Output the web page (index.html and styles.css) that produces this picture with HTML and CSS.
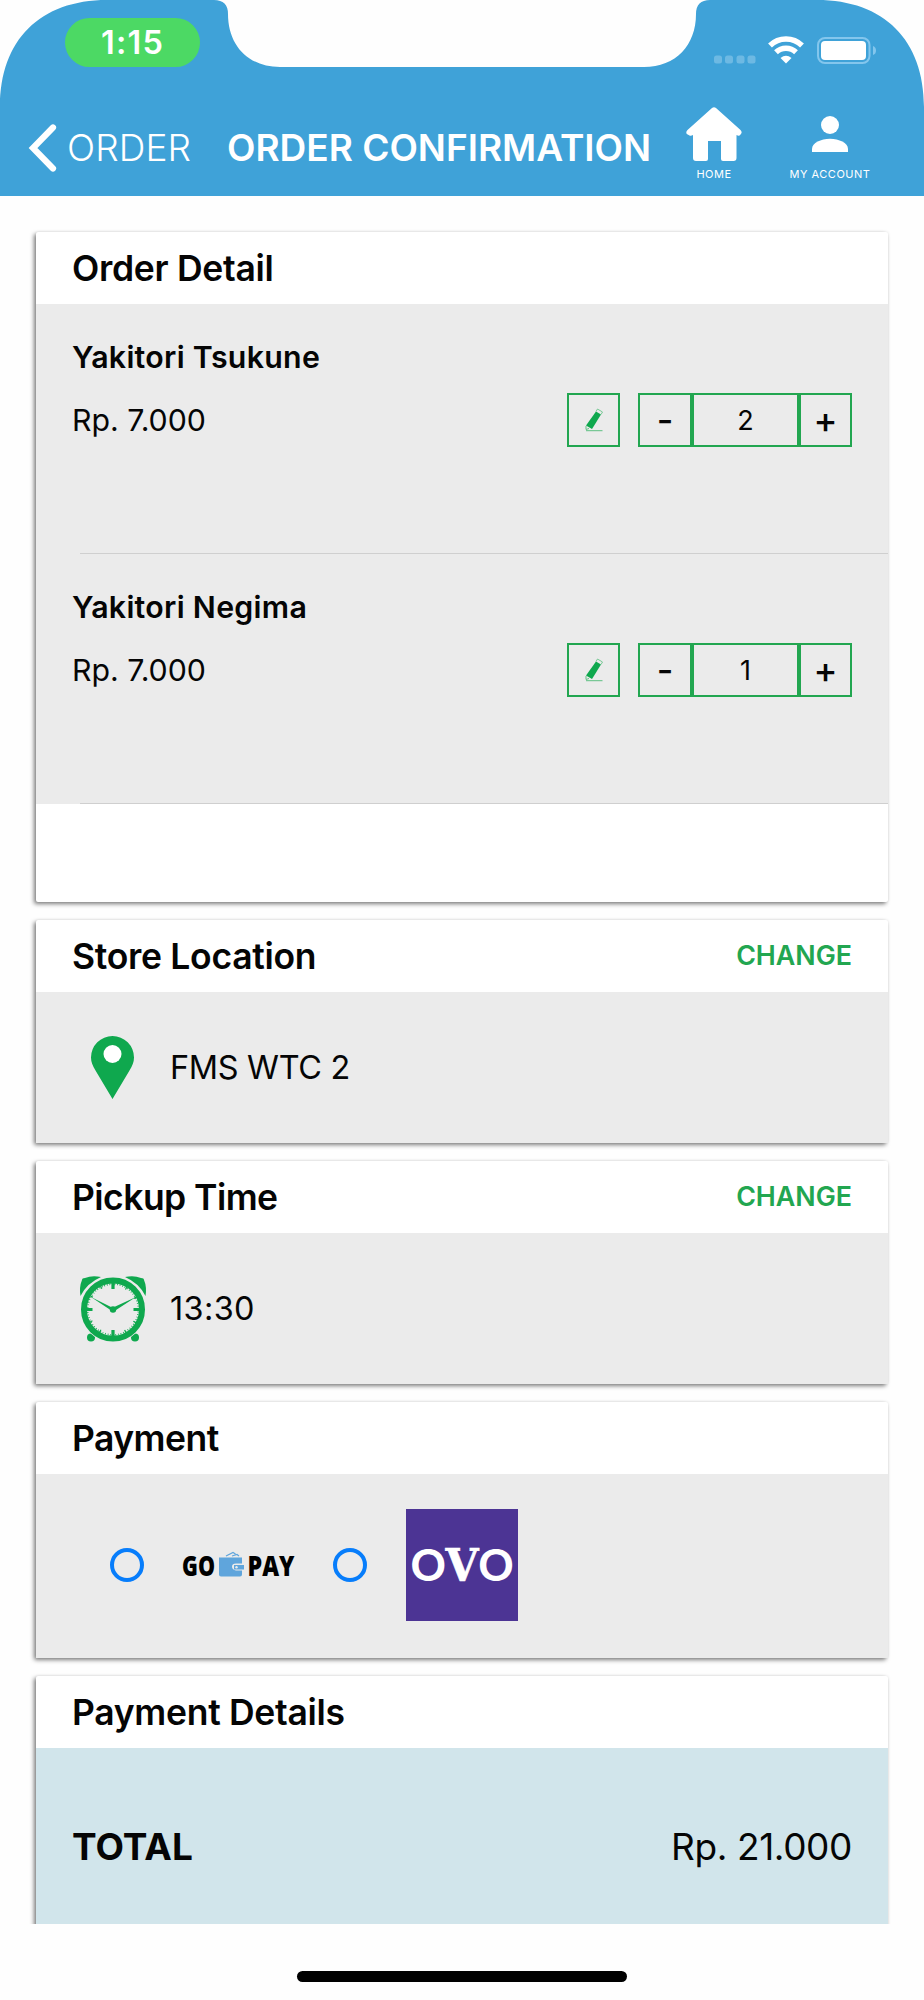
FILE: index.html
```html
<!DOCTYPE html>
<html lang="en">
<head>
<meta charset="utf-8">
<title>Order Confirmation</title>
<link rel="stylesheet" href="styles.css">
</head>
<body>
<div class="screen">
  <header class="header">
    <svg class="header-shape" width="924" height="196" viewBox="0 0 924 196"><path d="M0 196V107C0 40 40 0 107 0H214Q228 0 228 14C228 45 248 67 280 67H644C676 67 696 45 696 14Q696 0 710 0H817C884 0 924 40 924 107V196Z" fill="#3fa2d8"/></svg>
    <div class="status-bar">
      <span class="clock-pill">1:15</span>
      <svg class="status-icons" width="164" height="30" viewBox="0 0 164 30">
        <g fill="#6db9e3"><rect x="1" y="20.500" width="8" height="8" rx="2.500"/><rect x="12" y="20.500" width="8" height="8" rx="2.500"/><rect x="23.500" y="20.500" width="8" height="8" rx="2.500"/><rect x="34.500" y="20.500" width="8" height="8" rx="2.500"/></g>
        <g fill="none" stroke="#fff" stroke-width="5.500">
          <path d="M57 10.500A23 23 0 0 1 89 10.500"/>
          <path d="M63 17.300A14.500 14.500 0 0 1 83 17.300"/>
        </g>
        <path d="M67.500 23Q73 18.500 78.500 23L73 28.500Z" fill="#fff"/>
        <rect x="105" y="3" width="51.500" height="25" rx="7" fill="none" stroke="#83c6ed" stroke-width="2"/>
        <rect x="108" y="6" width="45" height="19" rx="4" fill="#fff"/>
        <path d="M160 11Q163 12 163 15.500T160 20Z" fill="#83c6ed"/>
      </svg>
    </div>
    <nav class="nav">
      <a class="back">
        <svg width="30" height="50" viewBox="0 0 30 50"><path d="M25 4.500L5 25L25 45.500" fill="none" stroke="#fff" stroke-width="6.200" stroke-linecap="round" stroke-linejoin="miter"/></svg>
        <span>ORDER</span>
      </a>
      <h1 class="title">ORDER CONFIRMATION</h1>
      <a class="nav-item home">
        <svg width="56" height="54" viewBox="0 0 56 54"><path d="M26 1Q28 -.7 30 1L54.500 23Q56.500 25 55 27L53.500 28.500Q52.500 29.300 50.500 28V51Q50.500 54 47.500 54H37Q35 54 35 52V34H22V52Q22 54 20 54H10Q7 54 7 51V28Q5 29.300 3.500 28.500L.800 27Q-.5 25 1.500 23Z" fill="#fff"/></svg>
        <span>HOME</span>
      </a>
      <a class="nav-item account">
        <svg width="36" height="36" viewBox="0 0 36 36"><circle cx="18" cy="9" r="9" fill="#fff"/><path d="M0 36V33C0 27 9 22.800 18 22.800S36 27 36 33V36Z" fill="#fff"/></svg>
        <span>MY ACCOUNT</span>
      </a>
    </nav>
  </header>

  <main class="content">
    <section class="card order-card">
      <div class="card-head"><h2>Order Detail</h2></div>
      <div class="item">
        <h3>Yakitori Tsukune</h3>
        <div class="item-row">
          <span class="price">Rp. 7.000</span>
          <button class="box edit"><svg width="18" height="24" viewBox="0 0 18 24"><path d="M11 3.500L16 6.500L7 21L1 17.500Z" fill="#0fa84e"/><path d="M11 3.500L12.500 1L17.500 4L16 6.500" fill="none" stroke="#5fc083" stroke-width=".8"/><path d="M1 18V21.500L4 20.500M1 22.700H17.500" fill="none" stroke="#5fc083" stroke-width="1"/></svg></button>
          <button class="box sign minus">-</button><span class="box qty">2</span><button class="box sign">+</button>
        </div>
      </div>
      <div class="item">
        <h3>Yakitori Negima</h3>
        <div class="item-row">
          <span class="price">Rp. 7.000</span>
          <button class="box edit"><svg width="18" height="24" viewBox="0 0 18 24"><path d="M11 3.500L16 6.500L7 21L1 17.500Z" fill="#0fa84e"/><path d="M11 3.500L12.500 1L17.500 4L16 6.500" fill="none" stroke="#5fc083" stroke-width=".8"/><path d="M1 18V21.500L4 20.500M1 22.700H17.500" fill="none" stroke="#5fc083" stroke-width="1"/></svg></button>
          <button class="box sign minus">-</button><span class="box qty">1</span><button class="box sign">+</button>
        </div>
      </div>
    </section>

    <section class="card info-card">
      <div class="card-head"><h2>Store Location</h2><a class="change">CHANGE</a></div>
      <div class="card-body info">
        <svg class="info-icon" width="68" height="68" viewBox="0 0 68 68"><path d="M33.500 65L16.500 36.500C13.500 31.500 12 28 12 23.500A21.500 21.500 0 0 1 55 23.500C55 28 53.500 31.500 50.500 36.500Z" fill="#0fa84e"/><circle cx="33.500" cy="20" r="9" fill="#fff"/></svg>
        <span class="store">FMS WTC 2</span>
      </div>
    </section>

    <section class="card info-card">
      <div class="card-head"><h2 class="tight">Pickup Time</h2><a class="change">CHANGE</a></div>
      <div class="card-body info">
        <svg class="info-icon" width="68" height="68" viewBox="0 0 68 68">
          <g fill="#0fa84e"><path d="M1.500 21Q0 12 3 5Q3 3 6 3Q13 0 22 2Q8 8 1.500 21Z"/><path d="M66.500 21Q68 12 65 5Q65 3 62 3Q55 0 46 2Q60 8 66.500 21Z"/><circle cx="12" cy="62.500" r="4"/><circle cx="56" cy="62.500" r="4"/></g>
          <circle cx="34" cy="34.500" r="32.800" fill="#ebebeb"/>
          <circle cx="34" cy="34.500" r="29" fill="none" stroke="#0fa84e" stroke-width="6"/>
          <circle cx="34" cy="34.500" r="25" fill="none" stroke="#0fa84e" stroke-width="3" stroke-dasharray="1.200 11.890" stroke-dashoffset=".6"/>
          <circle cx="34" cy="34.500" r="25.300" fill="none" stroke="#0fa84e" stroke-width="1.400" stroke-dasharray=".8 1.818" stroke-dashoffset=".4"/>
          <path d="M34 8V14M34 55V61M7.500 34.500H13.500M54.500 34.500H60.500" stroke="#0fa84e" stroke-width="3.200"/>
          <path d="M12 22L35 33.500L33 36ZM57 22L33 33L35.500 36Z" fill="#0fa84e"/>
          <circle cx="34" cy="34.500" r="3.200" fill="#0fa84e"/>
        </svg>
        <span class="time">13:30</span>
      </div>
    </section>

    <section class="card pay-card">
      <div class="card-head"><h2 class="tight">Payment</h2></div>
      <div class="card-body pay">
        <i class="radio"></i>
        <svg class="gopay" width="114" height="112" viewBox="0 0 114 112">
          <g font-family="Open Sans" font-weight="800" font-size="27.500"><text x="0" y="67" textLength="33" lengthAdjust="spacingAndGlyphs">GO</text><text x="65.500" y="67" textLength="47" lengthAdjust="spacingAndGlyphs">PAY</text></g>
          <path d="M37 48.500H60V54.500H54Q50 54.500 50 57.500T54 61.500H60V65.500Q60 67.500 58 67.500H39Q37 67.500 37 65.500Z" fill="#5fa5dc"/>
          <path d="M52 56H62V60.500H52Z" fill="#5fa5dc"/><circle cx="54.500" cy="58.200" r="1.200" fill="#ebebeb"/>
          <path d="M44 47L51 43.500L53.500 45M50 47L55 45.500L57 47" fill="none" stroke="#5fa5dc" stroke-width="1.300"/>
        </svg>
        <i class="radio"></i>
        <svg class="ovo" width="112" height="112" viewBox="0 0 112 112"><rect width="112" height="112" fill="#4c3494"/><g fill="#fff" font-size="44"><text x="3.700" y="71.500" font-family="Inter" font-weight="600" textLength="37" lengthAdjust="spacingAndGlyphs">O</text><text x="39.500" y="71.800" font-family="DejaVu Serif" font-weight="700" textLength="33" lengthAdjust="spacingAndGlyphs" stroke="#fff" stroke-width=".6">V</text><text x="71.500" y="71.500" font-family="Inter" font-weight="600" textLength="37" lengthAdjust="spacingAndGlyphs">O</text></g></svg>
      </div>
    </section>

    <section class="card total-card">
      <div class="card-head"><h2>Payment Details</h2></div>
      <div class="card-body total"><strong>TOTAL</strong><span class="sum">Rp. 21.000</span></div>
    </section>
  </main>
  <footer class="footer"><div class="home-indicator"></div></footer>
</div>
</body>
</html>
```
FILE: styles.css
```css
* { box-sizing: border-box; }
body { margin: 0; background: #fff; color: #050505; font-family: Inter, sans-serif; }
h1, h2, h3 { margin: 0; }
svg { display: block; flex: none; }
.screen { width: 924px; height: 2000px; display: flex; flex-direction: column; overflow: hidden; background: #fefefe; }

.header { position: relative; height: 196px; flex: none; color: #fff; }
.header-shape { position: absolute; left: 0; top: 0; }
.status-bar { position: relative; height: 100px; padding: 18px 47px 0 65px; display: flex; justify-content: space-between; }
.clock-pill { width: 135px; height: 49px; border-radius: 24.5px; background: #4cd964; display: flex; align-items: center; justify-content: center; font-size: 32.5px; font-weight: 600; letter-spacing: 1.2px; }
.status-icons { margin-top: 17px; }
.nav { position: relative; height: 95px; display: flex; }
.back { display: flex; align-items: center; gap: 9px; width: 200px; padding-left: 28px; font-size: 37px; font-weight: 350; letter-spacing: .1px; }
.title { width: 450px; padding-left: 27px; display: flex; align-items: center; font-size: 37px; font-weight: 600; white-space: nowrap; }
.nav-item { display: flex; flex-direction: column; align-items: center; font-size: 11px; line-height: 14px; letter-spacing: .5px; white-space: nowrap; }
.home { width: 128px; padding: 7px 0 0; }
.home span { margin-top: 6px; }
.account { width: 104px; padding-top: 16px; }
.account span { margin-top: 15px; }

.content { height: 1728px; padding: 36px 36px 0; display: flex; flex-direction: column; gap: 18px; overflow: hidden; }
.card { flex: none; background: #fff; border-radius: 2px; box-shadow: -2px 2px 4px rgba(0,0,0,.5), 0 0 3px rgba(0,0,0,.07); }
.card-head { height: 72px; padding: 1px 36px 0; display: flex; align-items: center; justify-content: space-between; }
.card-head h2 { font-size: 35.5px; font-weight: 600; line-height: 43px; letter-spacing: -.3px; }
.card-head .tight { letter-spacing: -.55px; }
.order-card { height: 670px; }
.info-card { height: 223px; }
.pay-card { height: 256px; }
.total-card { height: 300px; }
.change { padding-bottom: 3px; color: #22a650; font-size: 26.8px; font-weight: 600; }
.card-body { background: #ebebeb; padding: 0 36px; display: flex; align-items: center; }

.item { height: 250px; background: linear-gradient(#cfcfcf, #cfcfcf) 44px 100% / 808px 1px no-repeat #ebebeb; padding: 34px 36px 0; }
.item h3 { font-size: 30.3px; font-weight: 600; line-height: 38px; letter-spacing: .3px; }
.item-row { display: flex; height: 54px; margin-top: 17px; }
.price { flex: 1; font-size: 30.3px; line-height: 54px; }
.box { width: 54px; height: 54px; padding: 0; border: 2px solid #22a650; background: none; color: #050505; font: 400 27px/52px Inter, sans-serif; text-align: center; }
.edit { width: 53px; margin-right: 18px; display: flex; align-items: center; justify-content: center; }
.qty { width: 107px; }
.sign { width: 53px; font-size: 36px; font-weight: 500; line-height: 49px; }
.minus { width: 54px; }

.info { height: 151px; padding-left: 43px; }
.info-icon { margin-right: 23px; }
.info span { font-size: 32.4px; }
.info .store { letter-spacing: -.3px; }
.info .time { letter-spacing: .4px; }
.pay { height: 184px; padding: 0 0 3px 74px; }
.radio { width: 34px; height: 34px; border: 4px solid #077dfb; border-radius: 50%; flex: none; }
.gopay { margin: 0 37px 0 38px; }
.ovo { margin-left: 39px; }
.total { height: 228px; padding-bottom: 31px; background: #d1e5eb; justify-content: space-between; font-size: 37px; }
.sum { letter-spacing: -.4px; }

.footer { height: 76px; padding-top: 47px; }
.home-indicator { width: 330px; height: 11px; margin: 0 auto; border-radius: 6px; background: #000; }
```
